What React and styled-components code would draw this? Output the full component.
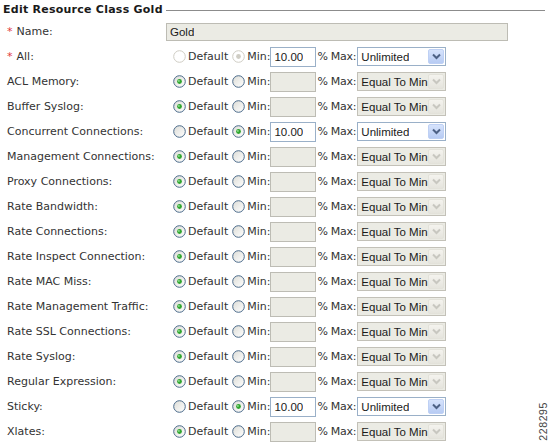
import React from "react";
import styled, { createGlobalStyle } from "styled-components";

const GlobalStyle = createGlobalStyle`
  html, body { margin: 0; padding: 0; background: #fff; }
  body { font-family: "DejaVu Sans", Verdana, sans-serif; font-size: 11px; color: #222; }
`;

const rows = [
  { label: "ACL Memory:", mode: "default" },
  { label: "Buffer Syslog:", mode: "default" },
  { label: "Concurrent Connections:", mode: "min" },
  { label: "Management Connections:", mode: "default" },
  { label: "Proxy Connections:", mode: "default" },
  { label: "Rate Bandwidth:", mode: "default" },
  { label: "Rate Connections:", mode: "default" },
  { label: "Rate Inspect Connection:", mode: "default" },
  { label: "Rate MAC Miss:", mode: "default" },
  { label: "Rate Management Traffic:", mode: "default" },
  { label: "Rate SSL Connections:", mode: "default" },
  { label: "Rate Syslog:", mode: "default" },
  { label: "Regular Expression:", mode: "default" },
  { label: "Sticky:", mode: "min" },
  { label: "Xlates:", mode: "default" },
];

const Page = styled.div`
  position: relative;
  width: 550px;
  height: 442px;
  overflow: hidden;
`;

const Legend = styled.div`
  display: flex;
  align-items: center;
  height: 19px;
  padding: 0 5px 0 3px;
  gap: 3px;
`;

const LegendText = styled.span`
  font-weight: bold;
  font-size: 11px;
  letter-spacing: 0.25px;
  color: #1a1a1a;
  white-space: nowrap;
`;

const LegendLine = styled.div`
  flex: 1;
  height: 1px;
  background: #8c8c8c;
  margin-top: 1px;
`;

const Row = styled.div`
  display: grid;
  grid-template-columns: 166px 1fr;
  align-items: center;
  height: 25px;
`;

const Label = styled.div`
  padding-left: 7px;
  color: #333;
  white-space: nowrap;
`;

const Star = styled.span`
  color: #e0393e;
  margin-right: 4px;
`;

const Controls = styled.div`
  display: flex;
  align-items: center;
  white-space: nowrap;
  padding-left: ${(p) => p.$pad || 0}px;
  color: #333;
`;

const FieldText = styled.span`
  font-family: "Liberation Sans", Arial, sans-serif;
  font-size: 11.5px;
  color: #1a1a1a;
  white-space: nowrap;
  overflow: hidden;
`;

const TextBox = styled.div`
  box-sizing: border-box;
  height: ${(p) => p.$h || 20}px;
  width: ${(p) => p.$w}px;
  border: 1px solid ${(p) => (p.$disabled ? "#bdbcb4" : "#9ab0c8")};
  background: ${(p) => (p.$disabled ? "#ebebe4" : "#fff")};
  padding: 0 3px;
  display: flex;
  align-items: center;
`;

const Choice = styled.span`
  display: inline-flex;
  align-items: center;
  gap: 2px;
  margin-right: ${(p) => p.$mr || 0}px;
`;

const Unit = styled.span`
  margin-left: ${(p) => p.$ml || 0}px;
  margin-right: ${(p) => p.$mr || 0}px;
  letter-spacing: -0.2px;
`;

const SelectBox = styled.div`
  box-sizing: border-box;
  width: 89px;
  height: 19px;
  border: 1px solid ${(p) => (p.$disabled ? "#c3c1b8" : "#9ab0c8")};
  background: ${(p) => (p.$disabled ? "#ebebe4" : "#fff")};
  display: flex;
  align-items: center;
  justify-content: space-between;
  padding: 0 1px 0 3px;
`;

const DropBtn = styled.div`
  flex: none;
  width: 16px;
  height: 15px;
  display: flex;
  align-items: center;
  justify-content: center;
  border-radius: 2px;
  background: ${(p) =>
    p.$disabled
      ? "linear-gradient(#f4f3ee, #e5e4dd)"
      : "linear-gradient(#d6e3fc, #b7cbf3)"};
  border: 1px solid ${(p) => (p.$disabled ? "#e3e2da" : "#bed0f4")};
  box-sizing: border-box;
`;

const Watermark = styled.div`
  position: absolute;
  right: 1px;
  top: 402px;
  writing-mode: vertical-rl;
  transform: rotate(180deg);
  font-family: "Liberation Sans", Arial, sans-serif;
  font-size: 10.5px;
  color: #444;
  letter-spacing: 0.6px;
`;

function Radio({ checked, disabled }) {
  const border = disabled ? "#cfcdc4" : "#4a6a8a";
  const dot = disabled ? "#cfcdc4" : "#2ea52e";
  return (
    <svg width="13" height="13" viewBox="0 0 13 13">
      <defs>
        <linearGradient id="rg" x1="0" y1="0" x2="1" y2="1">
          <stop offset="0" stopColor="#dcdcd6" />
          <stop offset="1" stopColor="#ffffff" />
        </linearGradient>
      </defs>
      <circle
        cx="6.5"
        cy="6.5"
        r="5.8"
        fill={disabled ? "#fff" : "url(#rg)"}
        stroke={border}
        strokeWidth="1"
      />
      {checked && <circle cx="6.5" cy="6.5" r="2.4" fill={dot} />}
      {checked && !disabled && <circle cx="5.9" cy="5.9" r="0.9" fill="#9be39b" />}
    </svg>
  );
}

function Chevron({ disabled }) {
  const c = disabled ? "#c8c7c0" : "#4d6185";
  return (
    <svg width="9" height="7" viewBox="0 0 9 7">
      <path d="M1 1.5 L4.5 5 L8 1.5" fill="none" stroke={c} strokeWidth="2" />
    </svg>
  );
}

function LimitControls({ mode, disabledAll }) {
  const isMin = mode === "min";
  return (
    <Controls $pad={7}>
      <Choice $mr={4}>
        <Radio checked={!isMin} disabled={disabledAll} />
        <span>Default</span>
      </Choice>
      <Choice>
        <Radio checked={isMin} disabled={disabledAll} />
        <span>Min:</span>
      </Choice>
      <TextBox $w={46} $disabled={!isMin}>
        <FieldText>{isMin ? "10.00" : ""}</FieldText>
      </TextBox>
      <Unit $ml={1}>%</Unit>
      <Unit $ml={3} $mr={1}>Max:</Unit>
      <SelectBox $disabled={!isMin}>
        <FieldText>{isMin ? "Unlimited" : "Equal To Min"}</FieldText>
        <DropBtn $disabled={!isMin}>
          <Chevron disabled={!isMin} />
        </DropBtn>
      </SelectBox>
    </Controls>
  );
}

export default function App() {
  return (
    <Page>
      <GlobalStyle />
      <Legend>
        <LegendText>Edit Resource Class Gold</LegendText>
        <LegendLine />
      </Legend>
      <Row>
        <Label>
          <Star>*</Star>Name:
        </Label>
        <Controls>
          <TextBox $w={342} $h={18} $disabled>
            <FieldText>Gold</FieldText>
          </TextBox>
        </Controls>
      </Row>
      <Row>
        <Label>
          <Star>*</Star>All:
        </Label>
        <LimitControls mode="min" disabledAll />
      </Row>
      {rows.map((r) => (
        <Row key={r.label}>
          <Label>{r.label}</Label>
          <LimitControls mode={r.mode} />
        </Row>
      ))}
      <Watermark>228295</Watermark>
    </Page>
  );
}
